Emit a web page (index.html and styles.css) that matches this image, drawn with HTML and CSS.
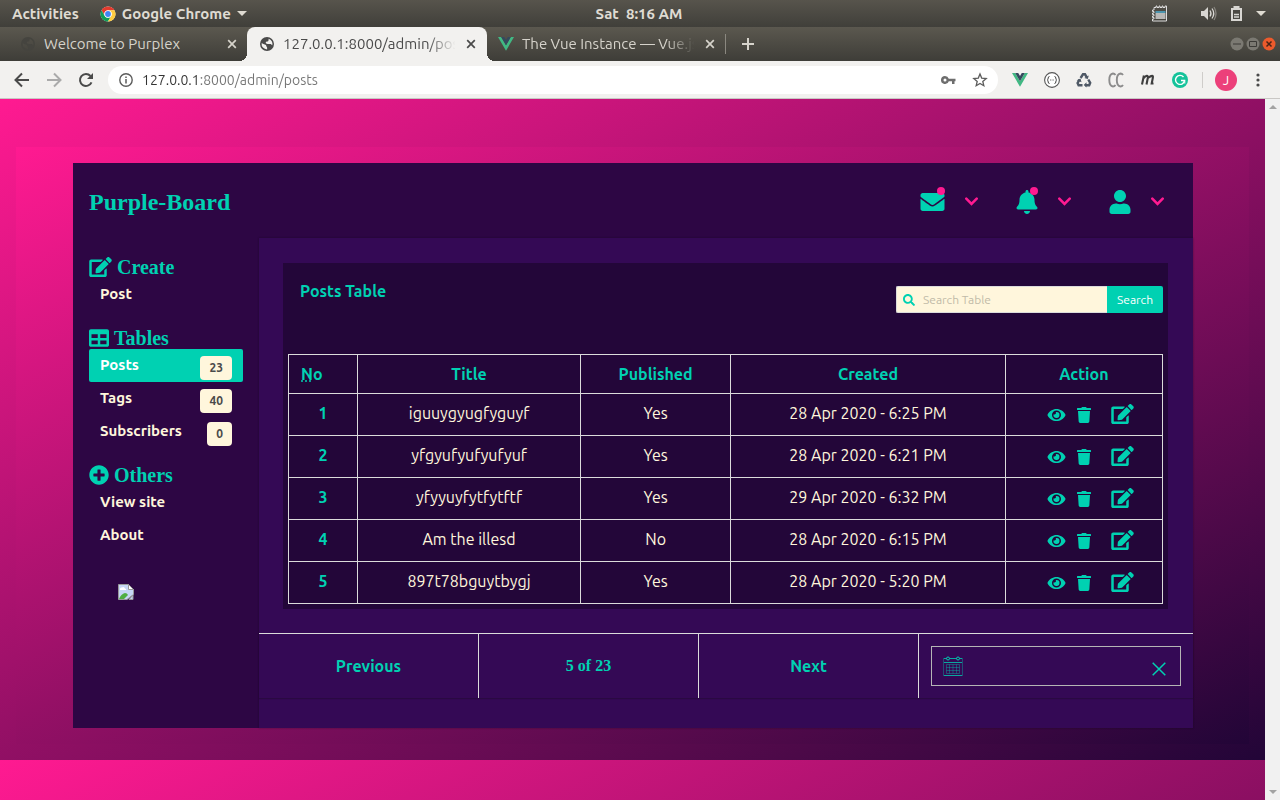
FILE: index.html
```html
<!DOCTYPE html>
<html lang="en">
<head>
<meta charset="utf-8">
<meta name="viewport" content="width=device-width, initial-scale=1">
<title>Posts</title>
<link rel="stylesheet" href="styles.css">
</head>
<body>
<svg class="sprite" aria-hidden="true">
  <symbol id="envelope" viewBox="0 0 512 512"><path d="M502.3 190.8c3.9-3.1 9.7-.2 9.7 4.7V400c0 26.5-21.5 48-48 48H48c-26.5 0-48-21.5-48-48V195.6c0-5 5.7-7.8 9.7-4.7 22.4 17.4 52.1 39.5 154.1 113.6 21.1 15.4 56.7 47.8 92.2 47.6 35.7.3 72-32.8 92.3-47.6 102-74.1 131.6-96.3 154-113.7zM256 320c23.2.4 56.6-29.2 73.4-41.4 132.7-96.3 142.8-104.7 173.4-128.7 5.8-4.5 9.2-11.5 9.2-18.9v-19c0-26.5-21.5-48-48-48H48c-26.5 0-48 21.5-48 48v19c0 7.4 3.4 14.3 9.2 18.9 30.6 23.9 40.7 32.4 173.4 128.7 16.8 12.2 50.2 41.8 73.4 41.4z"/></symbol>
  <symbol id="bell" viewBox="0 0 448 512"><path d="M224 512c35.32 0 63.97-28.65 63.97-64H160.03c0 35.35 28.65 64 63.97 64zm215.39-149.71c-19.32-20.76-55.47-51.99-55.47-154.29 0-77.7-54.48-139.9-127.94-155.16V32c0-17.67-14.32-32-31.98-32s-31.98 14.33-31.98 32v20.84C118.56 68.1 64.08 130.3 64.08 208c0 102.3-36.15 133.53-55.47 154.29-6 6.45-8.66 14.16-8.61 21.71.11 16.4 12.98 32 32.1 32h383.8c19.12 0 32-15.6 32.1-32 .05-7.55-2.61-15.27-8.61-21.71z"/></symbol>
  <symbol id="user" viewBox="0 0 448 512"><path d="M224 256c70.7 0 128-57.3 128-128S294.7 0 224 0 96 57.3 96 128s57.3 128 128 128zm89.6 32h-16.7c-22.2 10.2-46.9 16-72.9 16s-50.6-5.8-72.9-16h-16.7C60.2 288 0 348.2 0 422.4V464c0 26.5 21.5 48 48 48h352c26.5 0 48-21.5 48-48v-41.6c0-74.2-60.2-134.4-134.4-134.4z"/></symbol>
  <symbol id="edit" viewBox="0 0 576 512"><path d="M402.6 83.2l90.2 90.2c3.8 3.8 3.8 10 0 13.8L274.4 405.6l-92.8 10.3c-12.4 1.4-22.9-9.1-21.5-21.5l10.3-92.8L388.8 83.2c3.8-3.8 10-3.8 13.8 0zm162-22.9l-48.8-48.8c-15.2-15.2-39.9-15.2-55.2 0l-35.4 35.4c-3.8 3.8-3.8 10 0 13.8l90.2 90.2c3.8 3.8 10 3.8 13.8 0l35.4-35.4c15.2-15.3 15.2-40 0-55.2zM384 346.2V448H64V128h229.8c3.2 0 6.2-1.3 8.5-3.5l40-40c7.6-7.6 2.2-20.5-8.5-20.5H48C21.5 64 0 85.5 0 112v352c0 26.5 21.5 48 48 48h352c26.5 0 48-21.5 48-48V306.2c0-10.7-12.9-16-20.5-8.5l-40 40c-2.2 2.3-3.5 5.3-3.5 8.5z"/></symbol>
  <symbol id="eye" viewBox="0 0 576 512"><path d="M572.52 241.4C518.29 135.59 410.93 64 288 64S57.68 135.64 3.48 241.41a32.35 32.35 0 0 0 0 29.19C57.71 376.41 165.07 448 288 448s230.32-71.64 284.52-177.41a32.35 32.35 0 0 0 0-29.19zM288 400a144 144 0 1 1 144-144 143.93 143.93 0 0 1-144 144zm0-240a95.31 95.31 0 0 0-25.31 3.79 47.85 47.85 0 0 1-66.9 66.9A95.78 95.78 0 1 0 288 160z"/></symbol>
  <symbol id="trash" viewBox="0 0 448 512"><path d="M432 32H312l-9.4-18.7A24 24 0 0 0 281.1 0H166.8a23.72 23.72 0 0 0-21.4 13.3L136 32H16A16 16 0 0 0 0 48v32a16 16 0 0 0 16 16h416a16 16 0 0 0 16-16V48a16 16 0 0 0-16-16zM53.2 467a48 48 0 0 0 47.9 45h245.8a48 48 0 0 0 47.9-45L416 128H32z"/></symbol>
  <symbol id="grid" viewBox="0 0 512 512"><path d="M464 32H48C21.49 32 0 53.49 0 80v352c0 26.51 21.49 48 48 48h416c26.51 0 48-21.49 48-48V80c0-26.51-21.49-48-48-48zM224 416H64v-96h160v96zm0-160H64v-96h160v96zm224 160H288v-96h160v96zm0-160H288v-96h160v96z"/></symbol>
  <symbol id="plus-circle" viewBox="0 0 512 512"><path d="M256 8C119 8 8 119 8 256s111 248 248 248 248-111 248-248S393 8 256 8zm144 276c0 6.6-5.4 12-12 12h-92v92c0 6.6-5.4 12-12 12h-56c-6.6 0-12-5.4-12-12v-92h-92c-6.6 0-12-5.4-12-12v-56c0-6.6 5.4-12 12-12h92v-92c0-6.6 5.4-12 12-12h56c6.6 0 12 5.4 12 12v92h92c6.6 0 12 5.4 12 12v56z"/></symbol>
  <symbol id="search" viewBox="0 0 512 512"><path d="M505 442.7L405.3 343c-4.5-4.5-10.6-7-17-7H372c27.6-35.3 44-79.7 44-128C416 93.1 322.9 0 208 0S0 93.1 0 208s93.1 208 208 208c48.3 0 92.7-16.4 128-44v16.3c0 6.4 2.5 12.5 7 17l99.7 99.7c9.4 9.4 24.6 9.4 33.9 0l28.3-28.3c9.4-9.4 9.4-24.6.1-34zM208 336c-70.7 0-128-57.2-128-128 0-70.7 57.2-128 128-128 70.7 0 128 57.2 128 128 0 70.7-57.2 128-128 128z"/></symbol>
  <symbol id="chevron" viewBox="0 0 12 8"><path d="M1.2 1.4 6 6.2l4.8-4.8" fill="none" stroke="currentColor" stroke-width="2.4" stroke-linecap="round" stroke-linejoin="miter"/></symbol>
  <symbol id="cross" viewBox="0 0 10 10"><path d="M1.2 1.2l7.6 7.6M8.800 1.200L1.200 8.800" fill="none" stroke="currentColor" stroke-width="1.700"/></symbol>
  <symbol id="globe" viewBox="0 0 16 16"><path fill-rule="evenodd" d="M8 1a7 7 0 1 0 0 14A7 7 0 0 0 8 1zM2.600 7.300c1.500.3 2.200 1.200 3.200 1.200.9.100 1.400.5 1.400 1.300 0 .9.9.8.9 2v1.600A5.500 5.500 0 0 1 2.600 7.300zM9.600 2.700a5.500 5.500 0 0 1 3.700 6.600c-.8-.6-1.300-1.200-2.100-1.200H8.600c-1.200 0-1.900-.8-1.900-1.500 0-.9.800-1.200 1.900-1.200.8 0 .6-.8 1-1.200z"/></symbol>
  <symbol id="vue" viewBox="0 0 16 14"><path fill="#41b883" d="M0 0h3.200L8 8.300 12.800 0H16L8 13.800z"/><path fill="#35495e" d="M3.200 0h3L8 3.100 9.800 0h3L8 8.300z"/></symbol>
</svg>

<header class="topbar">
  <div class="topbar-left">
    <span>Activities</span>
    <span class="app-menu">
      <svg class="i16" viewBox="0 0 16 16"><circle cx="8" cy="8" r="7.500" fill="#fff"/><path fill="#e33b2e" d="M1.500 4.250A7.500 7.500 0 0 1 14.500 4.250H8A3.750 3.750 0 0 0 4.750 9.900z"/><path fill="#109d58" d="M1.500 4.250A7.500 7.500 0 0 0 8 15.500L11.250 9.900A3.750 3.750 0 0 1 4.750 9.900z"/><path fill="#ffcd40" d="M14.500 4.250A7.500 7.500 0 0 1 8 15.500L11.250 9.900A3.750 3.750 0 0 0 8 4.250z"/><circle cx="8" cy="8" r="3.600" fill="#fff"/><circle cx="8" cy="8" r="2.900" fill="#4285f4"/></svg>
      <span>Google Chrome</span>
      <span class="caret"></span>
    </span>
  </div>
  <span class="clock">Sat&nbsp; 8:16 AM</span>
  <div class="topbar-right">
    <svg class="i17 note" viewBox="0 0 17 17"><path d="M3 3.500V2.500h2V1h1v1.500h2V1h1v1.500h2V1h1v1.500h2V1h1.500v15H1.500v-2h1.500v-1.500H1.500V11H3V9.500H1.500V8H3V6.500H1.500V5H3z" fill="none" stroke="#ddd" stroke-width="1"/><path d="M4.500 7h10" stroke="#4db6dd" stroke-width="1.400"/><path d="M4.500 9h10M4.500 11h10M4.500 13h10" stroke="#ddd" stroke-width="1.300"/></svg>
    <svg class="i17" viewBox="0 0 17 17" fill="#d8d6d2"><path d="M1 6h3l4-4v13l-4-4H1z"/><path d="M10 5.500q2 3 0 6M12 3.500q3.500 5 0 10" fill="none" stroke="#d8d6d2" stroke-width="1.300"/><path d="M14 2q4 6.500 0 13" fill="none" stroke="#85827c" stroke-width="1.300"/></svg>
    <svg class="i17" viewBox="0 0 17 17"><path d="M5.500 1h6v2H14v13H3V3h2.500z" fill="#d8d6d2"/><path d="M5 5h7v9H5z" fill="#4a4842"/><path d="M6 9.500h5M6 12h5" stroke="#d8d6d2" stroke-width="1.400"/></svg>
    <span class="caret"></span>
  </div>
</header>

<nav class="tabs" aria-label="Browser tabs">
  <div class="tab first">
    <svg class="i16 dim"><use href="#globe"/></svg>
    <span class="tab-title">Welcome to Purplex</span>
    <button class="tab-close" aria-label="Close"><svg class="i10"><use href="#cross"/></svg></button>
  </div>
  <div class="tab active">
    <svg class="i16"><use href="#globe"/></svg>
    <span class="tab-title fade">127.0.0.1:8000/admin/posts</span>
    <button class="tab-close" aria-label="Close"><svg class="i10"><use href="#cross"/></svg></button>
  </div>
  <div class="tab last">
    <svg class="i16"><use href="#vue"/></svg>
    <span class="tab-title fade">The Vue Instance — Vue.js</span>
    <button class="tab-close" aria-label="Close"><svg class="i10"><use href="#cross"/></svg></button>
  </div>
  <button class="new-tab" aria-label="New tab"><svg class="i12" viewBox="0 0 12 12"><path d="M6 0v12M0 6h12" stroke="currentColor" stroke-width="2"/></svg></button>
  <div class="window-buttons">
    <svg class="i14" viewBox="0 0 14 14"><circle cx="7" cy="7" r="6.500" fill="#7b7972"/><path d="M3 7h8" stroke="#3c3b37"/></svg>
    <svg class="i14" viewBox="0 0 14 14"><circle cx="7" cy="7" r="6.500" fill="#7b7972"/><path d="M3.500 4.500h7v5h-7z" fill="none" stroke="#3c3b37"/></svg>
    <svg class="i14" viewBox="0 0 14 14"><circle cx="7" cy="7" r="6.500" fill="#ec5a2c"/><path d="M4.500 4.500l5 5M9.500 4.500l-5 5" stroke="#4a2416" stroke-width="1.500"/></svg>
  </div>
</nav>

<div class="toolbar">
  <button aria-label="Back"><svg class="i16" viewBox="0 0 16 16"><path d="M15 8H2M8 1.500L1.500 8 8 14.500" fill="none" stroke="#4a4a4a" stroke-width="2"/></svg></button>
  <button aria-label="Forward"><svg class="i16" viewBox="0 0 16 16"><path d="M1 8h13M8 1.500L14.500 8 8 14.500" fill="none" stroke="#aaa" stroke-width="2"/></svg></button>
  <button aria-label="Reload"><svg class="i16" viewBox="0 0 16 16"><path d="M13.500 10.300A6 6 0 1 1 12.500 4" fill="none" stroke="#4a4a4a" stroke-width="2"/><path d="M15 1v6H9z" fill="#4a4a4a"/></svg></button>
  <div class="address">
    <svg class="i14" viewBox="0 0 14 14"><circle cx="7" cy="7" r="6.200" fill="none" stroke="#5c5c5c" stroke-width="1.400"/><path d="M7 6v4.500M7 3.500V5" stroke="#5c5c5c" stroke-width="1.500"/></svg>
    <input class="url" type="text" value="127.0.0.1:8000/admin/posts" aria-label="Address">
    <svg class="i16" viewBox="0 0 16 16"><path fill-rule="evenodd" fill="#6e6e6e" d="M5 4a4 4 0 1 0 3.800 5.200H12V12h2.500V9.200H15.500V6.700H8.800A4 4 0 0 0 5 4zM5 6.500a1.500 1.500 0 1 1 0 3 1.500 1.500 0 0 1 0-3z"/></svg>
    <svg class="i16" viewBox="0 0 16 16"><path d="M8 2l1.700 4.100 4.500.4-3.400 2.900 1 4.300L8 11.400l-3.800 2.300 1-4.300L1.800 6.500l4.500-.4z" fill="none" stroke="#5c5c5c" stroke-width="1.300"/></svg>
  </div>
  <div class="extensions">
    <svg class="i16"><use href="#vue"/></svg>
    <svg class="i16" viewBox="0 0 16 16"><circle cx="8" cy="8" r="7.400" fill="#fff" stroke="#555" stroke-width="1.100"/><path d="M5.500 4.500q-1.300 0-1.300 1.500t-1 2q1 .5 1 2t1.300 1.500M10.500 4.500q1.300 0 1.300 1.500t1 2q-1 .5-1 2t-1.300 1.500" fill="none" stroke="#444"/><path d="M6 8h4" stroke="#777" stroke-dasharray="1 .6"/></svg>
    <svg class="i16" viewBox="0 0 16 16" fill="none" stroke="#4f5966" stroke-width="2.400"><path d="M4.600 6L7 2.300h2L11 5.600M12.300 7.500l1.900 3.300-1 2.400H9.500M6.500 13.200H2.600l-1-2.200L3.500 7.600"/><path d="M12.800 3.500l-1 3.600-3.500-1zM10.500 10.300v5.300L7.700 13zM.7 8.300l3.800-1.700 1 3.700z" fill="#4f5966" stroke="none"/></svg>
    <svg class="i16" viewBox="0 0 16 16" fill="none" stroke="#8c8c8c" stroke-width="1.900"><path d="M7.500 3Q6.500 1.500 5 1.500 1.300 2 1.300 8T5 14.500q1.500 0 2.500-1.500M15 3q-1-1.500-2.500-1.500Q8.800 2 8.800 8t3.700 6.500Q14 14.500 15 13"/></svg>
    <svg class="i16" viewBox="0 0 16 16" fill="none" stroke="#3f3f3f" stroke-width="2.100"><path d="M2 12.500L3.900 3.500M3.500 6.200Q7.900 1.800 7.900 5.400L6.500 12.500M7.900 6Q13.800 1.700 12.800 6L11.700 11.500h1.800"/></svg>
    <svg class="i16" viewBox="0 0 16 16"><circle cx="8" cy="8" r="8" fill="#15c39a"/><path d="M11.500 5A4.500 4.500 0 1 0 12.500 8.500H9" fill="none" stroke="#fff" stroke-width="1.400"/><path d="M12.800 8.300v3.200" stroke="#fff"/></svg>
  </div>
  <span class="toolbar-rule"></span>
  <button class="avatar">J</button>
  <button aria-label="Menu"><svg class="i16" viewBox="0 0 16 16" fill="#4a4a4a"><circle cx="8" cy="3" r="1.600"/><circle cx="8" cy="8" r="1.600"/><circle cx="8" cy="13" r="1.600"/></svg></button>
</div>

<div class="viewport">
  <div class="page">
    <div class="frame">
      <div class="board">
        <header class="board-head">
          <h1>Purple-Board</h1>
          <div class="board-menu">
            <button class="menu-item" aria-label="Messages"><span class="badge-icon"><svg class="i25"><use href="#envelope"/></svg><i class="dot"></i></span><svg class="chev"><use href="#chevron"/></svg></button>
            <button class="menu-item" aria-label="Notifications"><span class="badge-icon"><svg class="i24"><use href="#bell"/></svg><i class="dot"></i></span><svg class="chev"><use href="#chevron"/></svg></button>
            <button class="menu-item" aria-label="Account"><span class="badge-icon"><svg class="i24"><use href="#user"/></svg></span><svg class="chev"><use href="#chevron"/></svg></button>
          </div>
        </header>
        <div class="board-body">
          <aside class="sidebar">
            <section>
              <h2><svg class="i22"><use href="#edit"/></svg>Create</h2>
              <a class="link" href="#">Post</a>
            </section>
            <section>
              <h2><svg class="i20"><use href="#grid"/></svg>Tables</h2>
              <a class="link current" href="#">Posts<span class="tag">23</span></a>
              <a class="link" href="#">Tags<span class="tag">40</span></a>
              <a class="link" href="#">Subscribers<span class="tag">0</span></a>
            </section>
            <section>
              <h2><svg class="i20"><use href="#plus-circle"/></svg>Others</h2>
              <a class="link" href="#">View site</a>
              <a class="link" href="#">About</a>
            </section>
            <svg class="i16 missing" viewBox="0 0 16 16"><path d="M.5.500h10l5 5v5L9 15.500H.5z" fill="#c6d6f5" stroke="#999"/><path d="M2 5q0-2 2-1.500Q6 2 7 4.500 9 5 8 6H2z" fill="#fff"/><path d="M1 15q2-5 6-6 2 0 3 2l-4 4z" fill="#4fae42"/><path d="M10.500.5v5h5z" fill="#fff" stroke="#999"/><path d="M15 11v4.500h-4z" fill="#c6d6f5" stroke="#999"/></svg>
          </aside>
          <main class="main">
            <section class="card">
              <div class="card-head">
                <h3>Posts Table</h3>
                <form class="search">
                  <label class="search-box"><svg class="i12"><use href="#search"/></svg><input type="search" placeholder="Search Table" aria-label="Search Table"></label>
                  <button type="button">Search</button>
                </form>
              </div>
              <table class="posts">
                <colgroup><col class="c-no"><col class="c-title"><col class="c-pub"><col class="c-date"><col class="c-act"></colgroup>
                <thead>
                  <tr><th class="no"><abbr title="Number">N</abbr>o</th><th>Title</th><th>Published</th><th>Created</th><th>Action</th></tr>
                </thead>
                <tbody>
                  <tr><th>1</th><td>iguuygyugfyguyf</td><td>Yes</td><td>28 Apr 2020 - 6:25 PM</td><td class="act"><div class="actions"><button aria-label="View"><svg class="i19"><use href="#eye"/></svg></button><button aria-label="Delete"><svg class="i16"><use href="#trash"/></svg></button><button class="edit" aria-label="Edit"><svg class="i22"><use href="#edit"/></svg></button></div></td></tr>
                  <tr><th>2</th><td>yfgyufyufyufyuf</td><td>Yes</td><td>28 Apr 2020 - 6:21 PM</td><td class="act"><div class="actions"><button aria-label="View"><svg class="i19"><use href="#eye"/></svg></button><button aria-label="Delete"><svg class="i16"><use href="#trash"/></svg></button><button class="edit" aria-label="Edit"><svg class="i22"><use href="#edit"/></svg></button></div></td></tr>
                  <tr><th>3</th><td>yfyyuyfytfytftf</td><td>Yes</td><td>29 Apr 2020 - 6:32 PM</td><td class="act"><div class="actions"><button aria-label="View"><svg class="i19"><use href="#eye"/></svg></button><button aria-label="Delete"><svg class="i16"><use href="#trash"/></svg></button><button class="edit" aria-label="Edit"><svg class="i22"><use href="#edit"/></svg></button></div></td></tr>
                  <tr><th>4</th><td>Am the illesd</td><td>No</td><td>28 Apr 2020 - 6:15 PM</td><td class="act"><div class="actions"><button aria-label="View"><svg class="i19"><use href="#eye"/></svg></button><button aria-label="Delete"><svg class="i16"><use href="#trash"/></svg></button><button class="edit" aria-label="Edit"><svg class="i22"><use href="#edit"/></svg></button></div></td></tr>
                  <tr><th>5</th><td>897t78bguytbygj</td><td>Yes</td><td>28 Apr 2020 - 5:20 PM</td><td class="act"><div class="actions"><button aria-label="View"><svg class="i19"><use href="#eye"/></svg></button><button aria-label="Delete"><svg class="i16"><use href="#trash"/></svg></button><button class="edit" aria-label="Edit"><svg class="i22"><use href="#edit"/></svg></button></div></td></tr>
                </tbody>
              </table>
            </section>
            <footer class="pager">
              <a href="#">Previous</a>
              <span class="count">5 of 23</span>
              <a href="#">Next</a>
              <div class="date-cell">
                <div class="date-box">
                  <svg class="i20" viewBox="0 0 20 20" fill="none" stroke="#00d1b2"><path d="M1 2.500h2.500M6.500 2.500h7M16.500 2.500H19M1 6.500h18M1 19.500h18" opacity=".8"/><circle cx="5" cy="2.500" r="1.500"/><circle cx="15" cy="2.500" r="1.500"/><path d="M.5 2v18M19.500 2v18" opacity=".35"/><path d="M3.500 8.500h13v9h-13zM3.500 11.500h13M3.500 14.500h13M6.500 8.500v9M10 8.500v9M13.500 8.500v9" opacity=".35"/></svg>
                  <input type="text" aria-label="Date">
                  <button class="clear" aria-label="Clear"><svg class="i14" viewBox="0 0 14 14"><path d="M.7.700l12.600 12.600M13.300.700L.7 13.300" stroke="#00d1b2" stroke-width="1.500"/></svg></button>
                </div>
              </div>
            </footer>
          </main>
        </div>
      </div>
    </div>
  </div>
  <div class="scrollbar"><span class="arrow up"></span><span class="arrow down"></span></div>
</div>
</body>
</html>
```
FILE: styles.css
```css
:root {
  --ui: "Ubuntu", "Noto Sans", "Open Sans", sans-serif;
  --head: "Liberation Serif", serif;
  --teal: #00d1b2;
  --pink: #ff1a91;
  --night: #220537;
  --cream: #fff6dc;
  --line: #dbdbdb;
  --chrome: #f2f1ef;
}
* { box-sizing: border-box; }
body {
  margin: 0;
  min-height: 100vh;
  display: flex;
  flex-direction: column;
  font-family: var(--ui);
  font-size: 16px;
  line-height: 24px;
}
h1, h2, h3 { margin: 0; }
a { text-decoration: none; color: inherit; }
button {
  display: flex;
  align-items: center;
  justify-content: center;
  padding: 0;
  border: 0;
  background: none;
  color: inherit;
  font: inherit;
}
input { font: inherit; border: 0; outline: 0; padding: 0; min-width: 0; background: none; }
svg { display: block; flex: none; }
svg:not([fill]) { fill: currentColor; }
.sprite { position: absolute; width: 0; height: 0; }
.i10 { width: 10px; height: 10px; }
.i12 { width: 12px; height: 12px; }
.i14 { width: 14px; height: 14px; }
.i16 { width: 16px; height: 16px; }
.i17 { width: 17px; height: 17px; }
.i19 { width: 19px; height: 16px; }
.i20 { width: 20px; height: 20px; }
.i22 { width: 23px; height: 20px; }
.i24 { width: 22px; height: 24px; }
.i25 { width: 25px; height: 24px; }

/* Desktop bar */
.topbar {
  height: 27px;
  padding: 0 14px 0 12px;
  display: grid;
  grid-template-columns: 1fr auto 1fr;
  align-items: center;
  background: linear-gradient(#57544c, #403f3a);
  color: #dfdbd2;
  font-size: 15px;
  font-weight: 700;
}
.topbar-left, .topbar-right, .app-menu { display: flex; align-items: center; }
.topbar-left { gap: 21px; }
.app-menu { gap: 6px; }
.topbar-right { justify-content: flex-end; gap: 11px; }
.note { margin-right: 21px; }
.caret {
  border: 5px solid transparent;
  border-top-color: #dfdbd2;
  border-bottom-width: 0;
}

/* Browser tabs */
.tabs {
  height: 34px;
  display: flex;
  align-items: stretch;
  background: linear-gradient(#5b584f, #3e3d38);
  color: #d6d3cb;
}
.tab {
  width: 240px;
  padding: 0 11px 0 12px;
  display: flex;
  align-items: center;
  font-size: 15px;
}
.tab.first { width: 247px; padding: 0 10px 0 20px; }
.tab.last { width: 238px; padding: 0 10px 0 11px; }
.tab.active {
  position: relative;
  background: var(--chrome);
  color: #4a4a4a;
  border-radius: 8px 8px 0 0;
}
.tab.active::before, .tab.active::after {
  content: "";
  position: absolute;
  bottom: 0;
  width: 8px;
  height: 8px;
}
.tab.active::before { right: 100%; background: radial-gradient(circle at 0 0, transparent 8px, var(--chrome) 8px); }
.tab.active::after { left: 100%; background: radial-gradient(circle at 100% 0, transparent 8px, var(--chrome) 8px); }
.tab-title { flex: 1; margin: 0 7px 0 8px; white-space: nowrap; overflow: hidden; }
.fade { -webkit-mask-image: linear-gradient(90deg, #000 82%, transparent 98%); mask-image: linear-gradient(90deg, #000 82%, transparent 98%); }
.dim { color: #45443f; }
.new-tab { width: 44px; border-left: 1px solid #8b8880; margin: 7px 0; }
.window-buttons { margin-left: auto; padding-right: 4px; display: flex; align-items: center; gap: 2px; }

/* Browser toolbar */
.toolbar {
  height: 38px;
  padding: 0 14px;
  display: flex;
  align-items: center;
  gap: 16px;
  background: var(--chrome);
  border-bottom: 1px solid #c9c7c4;
}
.address {
  flex: 1;
  height: 28px;
  margin-left: -2px;
  padding: 0 10px 0 11px;
  display: flex;
  align-items: center;
  gap: 16px;
  border-radius: 14px;
  background: #fff;
}
.url {
  flex: 1;
  margin-left: -7px;
  font-size: 14px;
  background: linear-gradient(90deg, #333 57px, #747474 57px);
  -webkit-background-clip: text;
  background-clip: text;
  color: transparent;
}
.extensions { display: flex; gap: 16px; margin-left: -2px; }
.toolbar-rule { width: 1px; height: 16px; margin: 0 -4px 0 -2px; background: #cfcdca; }
.avatar { width: 22px; height: 22px; border-radius: 50%; background: #ec407a; color: #fff; font-size: 13px; margin-right: -3px; }

/* Page */
.viewport { flex: 1; display: flex; background: #f1f1f1; }
.page {
  flex: 1;
  padding: 48px 16px 56px;
  background: linear-gradient(to bottom right, var(--pink), var(--night)) 0 0 / 100% 661px;
}
.frame {
  padding: 16px 56px 16px 57px;
  background: linear-gradient(to bottom right, var(--pink), var(--night));
}
.board { background: #2d0644; color: var(--teal); }
.board-head {
  height: 75px;
  padding: 2px 29px 0 16px;
  display: flex;
  align-items: center;
  justify-content: space-between;
  background: #2d0644;
}
.board-head h1 { font-family: var(--head); font-size: 24px; line-height: 36px; }
.board-menu { display: flex; gap: 34px; }
.menu-item { gap: 20px; min-width: 59px; justify-content: flex-end; }
.badge-icon { position: relative; }
.dot {
  position: absolute;
  top: -3px;
  right: 0;
  width: 8px;
  height: 8px;
  border-radius: 50%;
  background: var(--pink);
}
.chev { width: 13px; height: 9px; color: var(--pink); }
.board-body { display: grid; grid-template-columns: 186px minmax(0, 1fr); }

/* Sidebar */
.sidebar { padding: 18px 16px; display: flex; flex-direction: column; gap: 16px; }
.sidebar h2 {
  display: flex;
  align-items: center;
  gap: 5px;
  font-family: var(--head);
  font-size: 20px;
  line-height: 22px;
}
.link {
  height: 33px;
  padding: 4px 11px;
  display: flex;
  justify-content: space-between;
  border-radius: 2px;
  color: var(--cream);
  font-size: 15px;
  font-weight: 700;
}
.link.current { background: var(--teal); color: #fff; }
.tag {
  height: 24px;
  margin-top: 3px;
  padding: 0 9px;
  border-radius: 4px;
  background: var(--cream);
  color: #4a4a4a;
  font-size: 12px;
}
.missing { margin: 16px 29px 0; }

/* Main column */
.main { background: #340955; box-shadow: 0 0 2px rgba(10, 10, 10, .4); }
.card { margin: 25px 25px 24px 24px; padding: 5px; background: #230639; }
.card-head {
  height: 86px;
  padding: 11px 0 0 12px;
  display: flex;
  align-items: flex-start;
  justify-content: space-between;
}
.card-head h3 { font-size: 16px; line-height: 24px; font-weight: 700; }
.search { display: flex; height: 27px; margin-top: 7px; font-size: 12px; }
.search-box {
  width: 211px;
  padding: 0 7px 0 6px;
  display: flex;
  align-items: center;
  gap: 8px;
  border: 1px solid var(--line);
  border-right: 0;
  border-radius: 2px 0 0 2px;
  background: var(--cream);
}
.search-box input { flex: 1; color: #363636; }
.search-box input::placeholder { color: #c1bba8; opacity: 1; }
.search button { width: 56px; background: var(--teal); color: #fff; border-radius: 0 2px 2px 0; }

.posts { width: 100%; border-collapse: collapse; table-layout: fixed; text-align: center; }
.c-no { width: 69px; }
.c-title { width: 25.5%; }
.c-pub { width: 17.2%; }
.c-date { width: 31.4%; }
.c-act { width: 18%; }
.posts th, .posts td { border: 1px solid var(--line); padding: 0 12px 4px; height: 42px; }
.posts thead th { height: 39px; padding-bottom: 0; }
.posts th { color: var(--teal); font-weight: 700; }
.posts td { color: var(--cream); }
.posts .no { text-align: left; }
.posts .act { padding-bottom: 0; }
abbr { text-decoration: underline dotted; }
.actions { display: flex; align-items: center; justify-content: center; gap: 10px; padding-left: 13px; color: var(--teal); }
.edit { margin-left: 9px; padding-bottom: 2px; }

/* Pager */
.pager {
  display: grid;
  grid-template-columns: repeat(3, minmax(0, 220fr)) minmax(0, 274fr);
  height: 65px;
  margin-bottom: 30px;
  border-top: 1px solid var(--line);
  box-shadow: 0 1px 1px rgba(10, 10, 10, .25);
  font-weight: 700;
}
.pager > a, .count {
  display: flex;
  align-items: center;
  justify-content: center;
  border-right: 1px solid var(--line);
}
.count { font-family: var(--head); }
.date-cell { padding: 12px; }
.date-box {
  height: 40px;
  padding: 0 14px 0 11px;
  display: flex;
  align-items: center;
  border: 1px solid #b5b5b5;
}
.date-box input { flex: 1; color: var(--cream); }
.clear { align-self: flex-end; margin-bottom: 9px; }

/* Scroll gutter */
.scrollbar {
  width: 15px;
  padding: 6px 0;
  display: flex;
  flex-direction: column;
  align-items: center;
  justify-content: space-between;
  background: #f1f1f1;
}
.arrow { border: 4px solid transparent; }
.up { border-bottom-color: #a3a3a3; border-top-width: 0; }
.down { border-top-color: #a3a3a3; border-bottom-width: 0; }
```
